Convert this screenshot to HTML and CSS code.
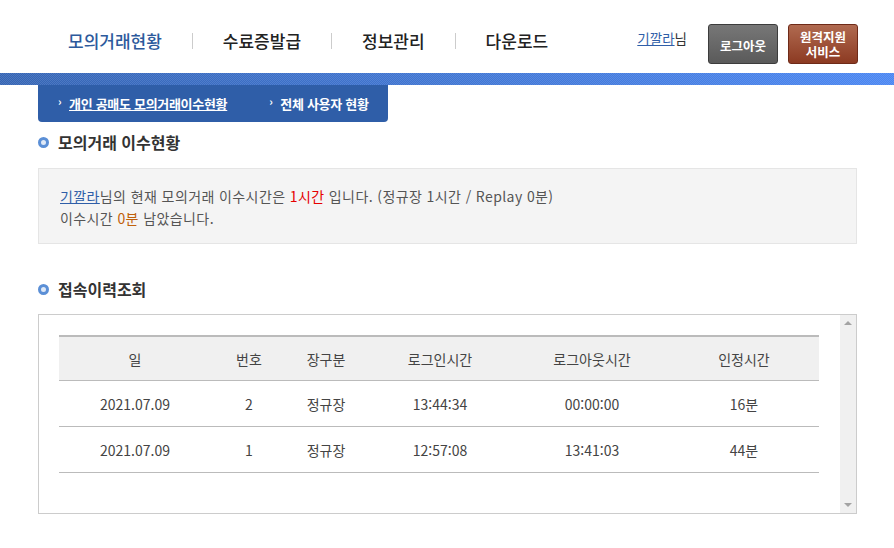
FILE: index.html
```html
<!DOCTYPE html>
<html lang="ko">
<head>
    <meta charset="UTF-8">
    <title>모의거래 이수현황</title>
    <link rel="stylesheet" href="styles.css">
</head>
<body>
    <header class="header">
        <nav class="nav-bar">
            <a href="#" class="active">모의거래현황</a>
            <span class="sep"></span>
            <a href="#">수료증발급</a>
            <span class="sep"></span>
            <a href="#">정보관리</a>
            <span class="sep"></span>
            <a href="#">다운로드</a>
        </nav>
        <div class="user-box">
            <span class="user-name"><a href="#">기깔라</a>님</span>
            <button class="btn btn-logout">로그아웃</button>
            <button class="btn btn-remote">원격지원<br>서비스</button>
        </div>
    </header>
    <div class="stripe"></div>

    <section class="container">
        <div class="sub-tab">
            <a href="#" class="on">개인 공매도 모의거래이수현황</a>
            <a href="#">전체 사용자 현황</a>
        </div>

        <h2 class="title">모의거래 이수현황</h2>
        <div class="info-box">
            <p><a href="#">기깔라</a>님의 현재 모의거래 이수시간은 <span class="red">1시간</span> 입니다. (정규장 1시간 / Replay 0분)</p>
            <p>이수시간 <span class="orange">0분</span> 남았습니다.</p>
        </div>

        <h2 class="title title-2">접속이력조회</h2>
        <div class="list-box">
            <div class="list-inner">
                <table class="log-table">
                    <thead>
                        <tr>
                            <th class="c1">일</th>
                            <th class="c2">번호</th>
                            <th class="c3">장구분</th>
                            <th class="c4">로그인시간</th>
                            <th class="c5">로그아웃시간</th>
                            <th class="c6">인정시간</th>
                        </tr>
                    </thead>
                    <tbody>
                        <tr>
                            <td>2021.07.09</td>
                            <td>2</td>
                            <td>정규장</td>
                            <td>13:44:34</td>
                            <td>00:00:00</td>
                            <td>16분</td>
                        </tr>
                        <tr>
                            <td>2021.07.09</td>
                            <td>1</td>
                            <td>정규장</td>
                            <td>12:57:08</td>
                            <td>13:41:03</td>
                            <td>44분</td>
                        </tr>
                    </tbody>
                </table>
            </div>
            <div class="scrollbar">
                <span class="arrow up"></span>
                <span class="arrow down"></span>
            </div>
        </div>
    </section>
</body>
</html>
```

FILE: styles.css
```css
body {
    margin: 0;
    padding: 0;
    font-family: "Noto Sans CJK KR", "Noto Sans", sans-serif;
    color: #444;
    background: #fff;
}
a {
    color: inherit;
    text-decoration: none;
}

/* header */
.header {
    height: 73px;
    display: flex;
    justify-content: space-between;
    align-items: flex-start;
}
.nav-bar {
    display: flex;
    align-items: center;
    height: 84px;
    margin-left: 68px;
    margin-top: -1px;
}
.nav-bar a {
    font-size: 17px;
    font-weight: 500;
    color: #222;
    line-height: 24px;
}
.nav-bar a.active {
    color: #2d5a9c;
}
.nav-bar .sep {
    width: 1px;
    height: 16px;
    background: #ccc;
    margin: 0 30px 0 30px;
}
.user-box {
    display: flex;
    align-items: flex-start;
    margin-top: 24px;
    margin-right: 36px;
}
.user-name {
    font-size: 13.5px;
    color: #333;
    margin-top: 4px;
    margin-right: 21px;
}
.user-name a {
    color: #2f5ea8;
    text-decoration: underline;
}
.btn {
    width: 70px;
    height: 40px;
    border-radius: 3px;
    color: #fff;
    font-family: "Noto Sans CJK KR", sans-serif;
    font-size: 12.5px;
    font-weight: bold;
    line-height: 15px;
    padding: 0;
    cursor: pointer;
}
.btn-logout {
    background: linear-gradient(#777, #5a5a5a);
    border: 1px solid #3c3c3c;
    padding-top: 2px;
}
.btn-remote {
    margin-left: 10px;
    background: linear-gradient(#b06a50, #8c3a22);
    border: 1px solid #6e2a18;
}

.stripe {
    height: 12px;
    background:
        conic-gradient(rgba(255,255,255,0.12) 25%, transparent 0 50%, rgba(255,255,255,0.12) 0 75%, transparent 0) 0 0 / 2px 2px,
        linear-gradient(to right, #3464b4, #4a86f2);
}

/* content */
.container {
    padding: 0 37px 0 38px;
}
.sub-tab {
    width: 350px;
    height: 37px;
    background: #2f5ea8;
    border-radius: 0 0 4px 4px;
    display: flex;
    align-items: center;
    padding-left: 20px;
    box-sizing: border-box;
}
.sub-tab a {
    color: #fff;
    font-size: 13px;
    font-weight: bold;
    white-space: nowrap;
    margin-right: 42px;
    position: relative;
    padding-left: 11px;
    letter-spacing: -0.3px;
}
.sub-tab a::before {
    content: "›";
    position: absolute;
    left: 0;
    top: -1px;
    font-size: 11px;
}
.sub-tab a.on {
    text-decoration: underline;
}

.title {
    font-size: 16px;
    font-weight: bold;
    color: #333;
    margin: 8px 0 14px;
    line-height: 24px;
    padding-left: 20px;
    position: relative;
}
.title::before {
    content: "";
    position: absolute;
    left: 0;
    top: 7px;
    width: 5px;
    height: 5px;
    border: 3px solid #5b8fd6;
    border-radius: 50%;
    background: #dfe9f7;
}
.title-2 {
    margin-top: 33px;
    margin-bottom: 13px;
}

.info-box {
    background: #f4f4f4;
    border: 1px solid #e5e5e5;
    padding: 16px 21px 14px;
    font-size: 14px;
    letter-spacing: 0.4px;
    color: #555;
}
.info-box p {
    margin: 0;
    line-height: 22px;
}
.info-box a {
    color: #2f5ea8;
    text-decoration: underline;
}
.info-box .red {
    color: #e60000;
}
.info-box .orange {
    color: #c0600a;
}

.list-box {
    border: 1px solid #ccc;
    height: 198px;
    display: flex;
}
.list-inner {
    flex: 1;
    padding: 20px 21px 0 20px;
}
.log-table {
    width: 760px;
    border-collapse: collapse;
    font-size: 14px;
    color: #444;
    text-align: center;
}
.log-table th {
    background: #f0f0f0;
    font-weight: normal;
    height: 43px;
    border-top: 2px solid #bbb;
    border-bottom: 1px solid #bbb;
    padding: 0;
}
.log-table td {
    height: 45px;
    border-bottom: 1px solid #bbb;
    padding: 0;
}
.c1 { width: 152px; }
.c2 { width: 76px; }
.c3 { width: 78px; }
.c4 { width: 150px; }
.c5 { width: 154px; }
.c6 { width: 150px; }

.scrollbar {
    width: 17px;
    background: #f0f0f0;
    display: flex;
    flex-direction: column;
    justify-content: space-between;
    align-items: center;
    padding: 6px 0;
}
.arrow {
    width: 0;
    height: 0;
    border-left: 4px solid transparent;
    border-right: 4px solid transparent;
}
.arrow.up {
    border-bottom: 4px solid #a3a3a3;
}
.arrow.down {
    border-top: 4px solid #a3a3a3;
}
```
